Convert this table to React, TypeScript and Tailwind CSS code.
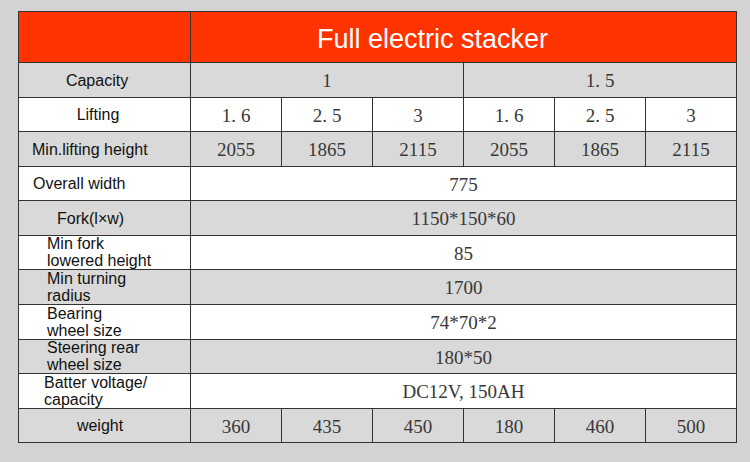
const serif = "font-['Liberation_Serif',serif] text-[19px] text-[#383838]";
const sans = "font-['Liberation_Sans',Arial,sans-serif] text-[16px] text-[#111]";

const gray = "bg-[#d9d9d9]";
const white = "bg-white";

// draws "1.6" with the wide full-stop gap of the original font
function Num({ v }: { v: string }) {
  if (!v.includes(".")) return <>{v}</>;
  const [a, b] = v.split(".");
  return (
    <>
      {a}
      <span className="mr-[5px]">.</span>
      {b}
    </>
  );
}

function Label({ text, bg, cls }: { text: React.ReactNode; bg: string; cls: string }) {
  return <div className={`${bg} ${sans} flex items-center ${cls}`}>{text}</div>;
}

function Val({ v, bg, span }: { v: string; bg: string; span?: string }) {
  return (
    <div className={`${bg} ${serif} ${span ?? ""} flex items-center justify-center pt-[3px]`}>
      <Num v={v} />
    </div>
  );
}

function Wide({ label, v, bg, cls }: { label: React.ReactNode; v: string; bg: string; cls: string }) {
  return (
    <>
      <Label text={label} bg={bg} cls={cls} />
      <Val v={v} bg={bg} span="col-span-6" />
    </>
  );
}

export default function App() {
  const lifts = ["1.6", "2.5", "3", "1.6", "2.5", "3"];
  const heights = ["2055", "1865", "2115", "2055", "1865", "2115"];
  const weights = ["360", "435", "450", "180", "460", "500"];
  const two = "leading-[17px] pl-[28px] pb-[1px]";

  return (
    <div className="w-[750px] h-[462px] bg-[#d3d3d3] pt-[11px] pl-[18px]">
      <div className="grid w-fit border border-[#333] bg-[#333] gap-px grid-cols-[171px_repeat(6,90px)] grid-rows-[50px_34px_33px_34px_33px_34px_33px_34px_34px_33px_34px_33px]">
        <div className="bg-[#ff3300]" />
        <div className="col-span-6 bg-[#ff3300] flex items-center justify-center pr-[62px] pt-[4px] font-['Liberation_Sans',Arial,sans-serif] text-[27px] text-white">
          Full electric stacker
        </div>

        <Label text="Capacity" bg={gray} cls="justify-center pr-[15px] pt-[1px]" />
        <Val v="1" bg={gray} span="col-span-3" />
        <Val v="1.5" bg={gray} span="col-span-3" />

        <Label text="Lifting" bg={white} cls="justify-center pr-[13px] pt-[1px]" />
        {lifts.map((v, i) => (
          <Val key={i} v={v} bg={white} />
        ))}

        <Label text="Min.lifting height" bg={gray} cls="pl-[13px] pt-[1px]" />
        {heights.map((v, i) => (
          <Val key={i} v={v} bg={gray} />
        ))}

        <Wide label="Overall width" v="775" bg={white} cls="pl-[14px] pt-[1px]" />
        <Wide label="Fork(l×w)" v="1150*150*60" bg={gray} cls="pl-[38px] pt-[1px]" />
        <Wide label={<span>Min fork<br />lowered height</span>} v="85" bg={white} cls={two} />
        <Wide label={<span>Min turning<br />radius</span>} v="1700" bg={gray} cls={two} />
        <Wide label={<span>Bearing<br />wheel size</span>} v="74*70*2" bg={white} cls={two} />
        <Wide label={<span>Steering rear<br />wheel size</span>} v="180*50" bg={gray} cls={two} />
        <Wide
          label={<span>Batter voltage/<br />capacity</span>}
          v="DC12V, 150AH"
          bg={white}
          cls="leading-[17px] pl-[25px] pb-[1px]"
        />

        <Label text="weight" bg={gray} cls="justify-center pr-[9px] pt-[1px]" />
        {weights.map((v, i) => (
          <Val key={i} v={v} bg={gray} />
        ))}
      </div>
    </div>
  );
}
